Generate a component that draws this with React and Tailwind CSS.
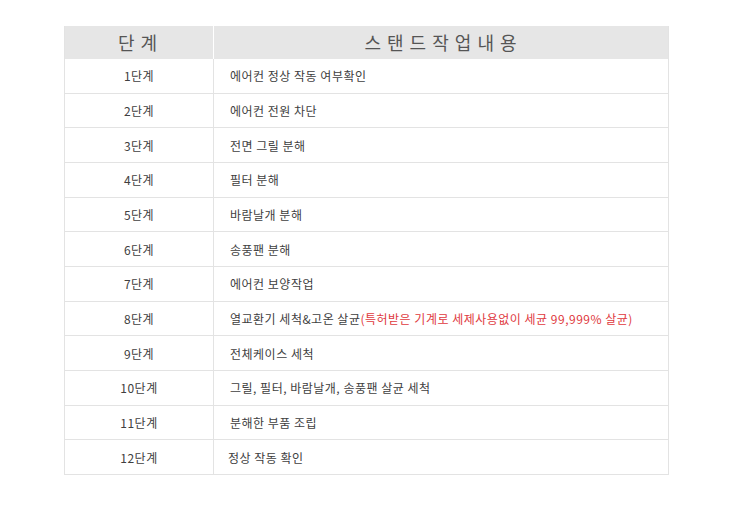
import React from 'react';

const steps = [
  { step: '1단계', text: '에어컨 정상 작동 여부확인' },
  { step: '2단계', text: '에어컨 전원 차단' },
  { step: '3단계', text: '전면 그릴 분해' },
  { step: '4단계', text: '필터 분해' },
  { step: '5단계', text: '바람날개 분해' },
  { step: '6단계', text: '송풍팬 분해' },
  { step: '7단계', text: '에어컨 보양작업' },
  { step: '8단계', text: '열교환기 세척&고온 살균', note: '(특허받은 기계로 세제사용없이 세균 99,999% 살균)' },
  { step: '9단계', text: '전체케이스 세척' },
  { step: '10단계', text: '그릴, 필터, 바람날개, 송풍팬 살균 세척' },
  { step: '11단계', text: '분해한 부품 조립' },
  { step: '12단계', text: '정상 작동 확인', shift: true },
];

const App = () => {
  return (
    <div
      className="w-[730px] h-[510px] bg-white pt-[26px] pl-[64px]"
      style={{ fontFamily: '"Malgun Gothic", "Noto Sans CJK KR", sans-serif' }}
    >
      <div className="w-[605px] border-x border-[#e3e3e3]">
        {/* header */}
        <div className="grid grid-cols-[149px_1fr] h-[33px] bg-[#e6e6e6] text-[18px] text-[#555]">
          <div className="flex items-center justify-center border-r border-white tracking-[1px] pr-[2px]">단 계</div>
          <div className="flex items-center justify-center tracking-[1px]">스 탠 드 작 업 내 용</div>
        </div>

        {/* rows */}
        {steps.map((row) => (
          <div
            key={row.step}
            className="grid grid-cols-[149px_1fr] h-[34.67px] border-b border-[#e3e3e3] text-[12px] text-[#404040] tracking-[0.5px]"
          >
            <div className="flex items-center justify-center border-r border-[#e3e3e3] pt-px">{row.step}</div>
            <div className={`flex items-center pt-px ${row.shift ? 'pl-[14px]' : 'pl-[16px]'}`}>
              {row.text}
              {row.note && <span className="text-[#e0393e]">{row.note}</span>}
            </div>
          </div>
        ))}
      </div>
    </div>
  );
};

export default App;
